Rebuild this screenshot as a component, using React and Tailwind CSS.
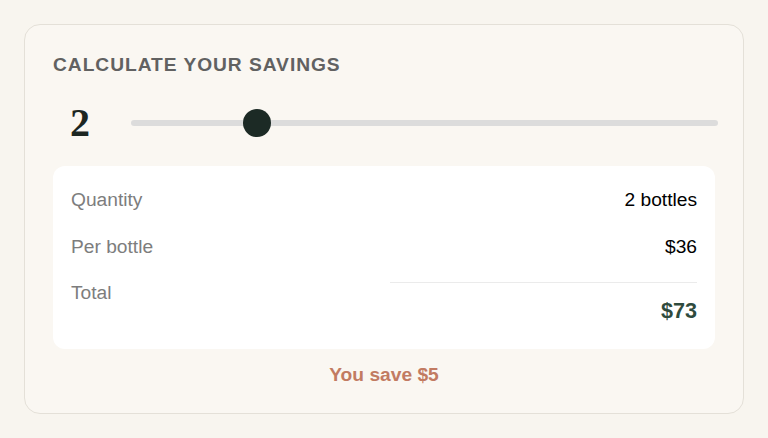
import React from "react";

export default function App() {
  const qty = 2;
  const min = 1;
  const max = 6;
  const pct = (qty - min) / (max - min);

  return (
    <div className="min-h-screen bg-[#f8f5ef] p-6 font-['Liberation_Sans',Arial,sans-serif]">
      <div className="w-[720px] rounded-2xl border border-[#e4e0d8] bg-[#faf7f2] px-7 pt-[26px] pb-6">
        {/* Title */}
        <h2 className="text-[19.2px] leading-7 font-bold uppercase tracking-wider text-[#616161]">
          Calculate your savings
        </h2>

        {/* Slider row */}
        <div className="mt-[20px] flex items-center gap-6">
          <div className="w-[54px] text-center font-['Liberation_Serif',serif] text-[40px] leading-[48px] font-bold text-[#1c2622]">
            {qty}
          </div>
          <div className="relative flex-1 h-7 -mr-[3px] flex items-center">
            <div className="h-[6px] w-full rounded-full bg-[#dcdcdc]" />
            <div
              className="absolute top-1/2 h-7 w-7 -translate-x-1/2 -translate-y-1/2 rounded-full bg-[#1c2a25]"
              style={{ left: `calc(14px + (100% - 28px) * ${pct})` }}
            />
          </div>
        </div>

        {/* Breakdown */}
        <div className="mt-[19px] rounded-xl bg-white px-[18px] pt-5 pb-6 text-[19.2px]">
          <div className="flex items-center justify-between leading-7">
            <span className="text-[#7d7d7d]">Quantity</span>
            <span className="text-black">{qty} bottles</span>
          </div>
          <div className="mt-[19px] flex items-center justify-between leading-7">
            <span className="text-[#7d7d7d]">Per bottle</span>
            <span className="text-black">$36</span>
          </div>
          <div className="mt-[18px] flex items-start justify-between">
            <span className="leading-7 text-[#7d7d7d]">Total</span>
            <div className="mt-[3px] w-[307px] border-t border-[#ebebeb] pt-[14px] text-right text-[21.6px] leading-7 font-bold text-[#2f4b3d]">
              $73
            </div>
          </div>
        </div>

        {/* Savings */}
        <p className="mt-[12px] text-center text-[19.2px] leading-7 font-bold text-[#c27b62]">
          You save $5
        </p>
      </div>
    </div>
  );
}
